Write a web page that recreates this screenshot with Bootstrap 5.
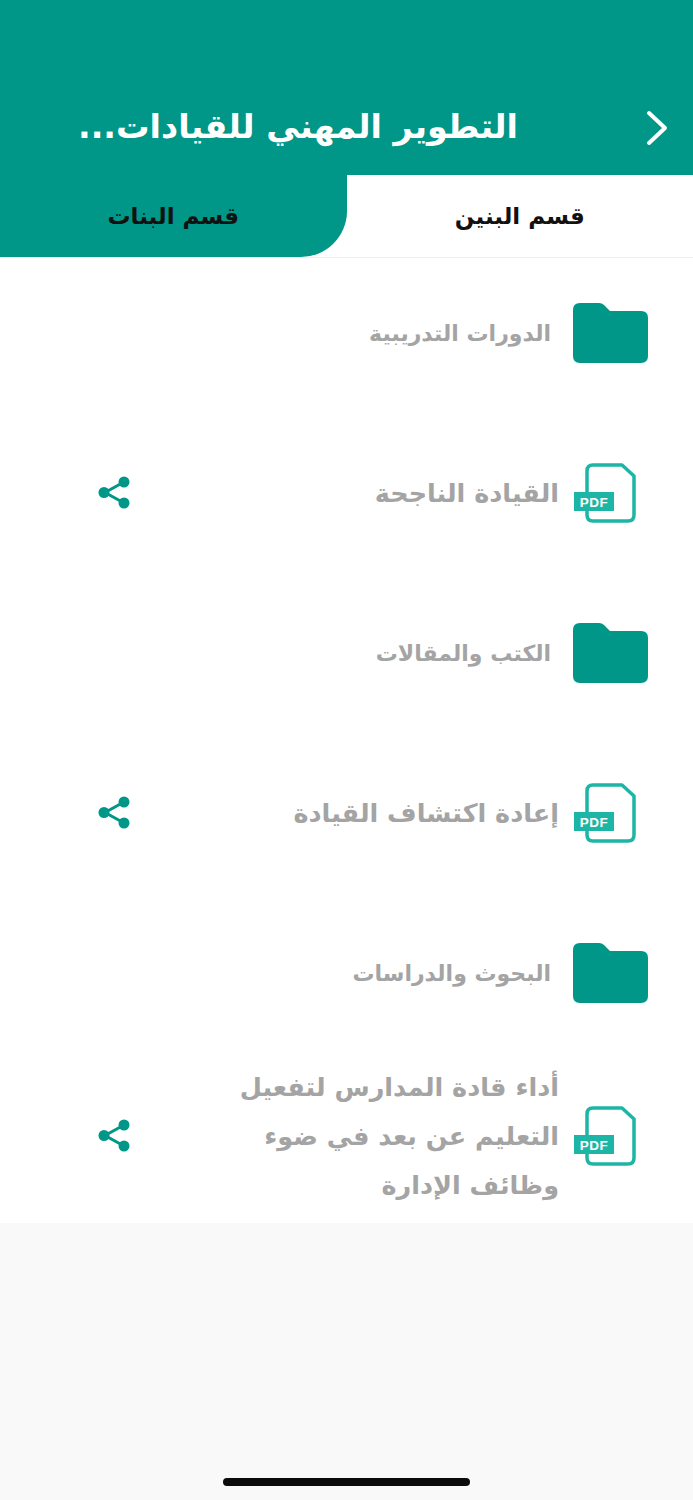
<!DOCTYPE html>
<html lang="ar" dir="rtl">
<head>
  <meta charset="UTF-8">
  <meta name="viewport" content="width=device-width, initial-scale=1">
  <title>التطوير المهني للقيادات</title>
  <link href="https://cdn.jsdelivr.net/npm/bootstrap@5.3.3/dist/css/bootstrap.min.css" rel="stylesheet">
  <style>
    body { background: #f9f9f9; font-family: "DejaVu Sans", sans-serif; }
    .app-shell { height: 1500px; }
    .top-bar { height: 175px; background: #009688; padding-right: 25px; }
    .back-icon { width: 22px; height: 36px; margin-top: 110px; }
    .top-title { color: #fff; font-size: 33.4px; font-weight: 700; margin: 88px 128px 0 0; line-height: 78px; height: 78px; white-space: nowrap; }
    .tab-bar { height: 83px; background: #fff; border-bottom: 1px solid #e8f2f0; }
    .tab-item { width: 50%; color: #111; font-size: 23px; font-weight: 700; }
    .tab-on { background: #fff; }
    .tab-off { background: #009688; border-bottom-right-radius: 46px; }
    .item-list { background: #fff; height: 965px; padding-bottom: 9px; }
    .item-row { min-height: 150px; margin-bottom: 10px; padding-right: 45px; padding-left: 98px; }
    .item-row:last-child { margin-bottom: 0; min-height: 156px; }
    .folder-icon { width: 75px; height: 60px; flex: none; margin-left: 22px; }
    .pdf-icon { width: 62px; height: 60px; flex: none; margin-right: 12px; margin-left: 15px; }
    .item-name { color: #a4a4a4; font-weight: 700; line-height: 49px; }
    .name-folder { font-size: 22px; }
    .name-pdf { font-size: 25.5px; }
    .share-icon { width: 33px; height: 35px; flex: none; margin-right: auto; margin-top: -2px; }
    .home-bar { width: 247px; height: 8px; background: #0b0b0b; border-radius: 4px; margin-bottom: 14px; }
  </style>
</head>
<body>

<div class="app-shell d-flex flex-column">

  <!-- header -->
  <div class="top-bar d-flex align-items-start">
    <svg class="back-icon" viewBox="0 0 22 36" fill="none" stroke="#fff" stroke-width="4" stroke-linecap="round" stroke-linejoin="round"><path d="M3 3 L19 18 L3 33"/></svg>
    <div class="top-title">التطوير المهني للقيادات...</div>
  </div>

  <!-- tabs -->
  <div class="tab-bar d-flex">
    <div class="tab-item tab-on d-flex align-items-center justify-content-center">قسم البنين</div>
    <div class="tab-item tab-off d-flex align-items-center justify-content-center">قسم البنات</div>
  </div>

  <div id="item-list" class="item-list"></div>

  <div class="flex-grow-1"></div>
  <div class="home-bar align-self-center"></div>
</div>

<script src="https://cdn.jsdelivr.net/npm/bootstrap@5.3.3/dist/js/bootstrap.bundle.min.js"></script>
<script>
const folderSvg = `<svg class="folder-icon" viewBox="0 0 75 60"><path fill="#009688" d="M7 0 H26 Q29 0 31 2 L37 8 H68 Q75 8 75 15 V53 Q75 60 68 60 H7 Q0 60 0 53 V7 Q0 0 7 0 Z"/></svg>`;

const pdfSvg = `<svg class="pdf-icon" viewBox="0 0 62 60">
  <path fill="none" stroke="#1db5a5" stroke-width="3.5" stroke-linejoin="round" d="M19 2 H48 L60 13 V52 Q60 58 54 58 H19 Q13 58 13 52 V8 Q13 2 19 2 Z"/>
  <rect x="0" y="29" width="40" height="19" fill="#1db5a5"/>
  <text x="20" y="43.5" text-anchor="middle" direction="ltr" font-family="Liberation Sans, sans-serif" font-weight="700" font-size="13.5" letter-spacing=".5" fill="#fff">PDF</text>
</svg>`;

const shareSvg = `<svg class="share-icon" viewBox="0 0 33 35" fill="#009688" stroke="#009688">
  <path stroke-width="3" fill="none" d="M26 7 L7 17.5 L26 28"/>
  <circle cx="26" cy="7" r="5.5" stroke="none"/>
  <circle cx="6" cy="17.5" r="5.5" stroke="none"/>
  <circle cx="26" cy="28" r="5.5" stroke="none"/>
</svg>`;

const items = [
  { type: "folder", name: "الدورات التدريبية" },
  { type: "pdf", name: "القيادة الناجحة" },
  { type: "folder", name: "الكتب والمقالات" },
  { type: "pdf", name: "إعادة اكتشاف القيادة" },
  { type: "folder", name: "البحوث والدراسات" },
  { type: "pdf", name: "أداء قادة المدارس لتفعيل<br>التعليم عن بعد في ضوء<br>وظائف الإدارة" }
];

const list = document.getElementById('item-list');
items.forEach(item => {
  const isPdf = item.type === "pdf";
  list.innerHTML += `
    <div class="item-row d-flex align-items-center">
      ${isPdf ? pdfSvg : folderSvg}
      <div class="item-name ${isPdf ? 'name-pdf' : 'name-folder'}">${item.name}</div>
      ${isPdf ? shareSvg : ""}
    </div>`;
});
</script>
</body>
</html>
